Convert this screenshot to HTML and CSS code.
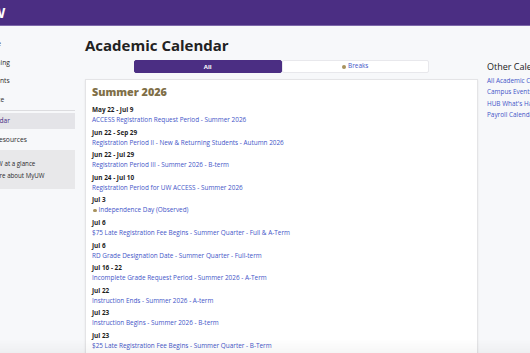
FILE: index.html
```html
<!DOCTYPE html>
<html lang="en">
<head>
<meta charset="utf-8">
<title>Academic Calendar - MyUW</title>
<link rel="stylesheet" href="styles.css">
</head>
<body>
<header class="topbar">
  <span class="brand">MyUW</span>
</header>
<div class="layout">
  <aside class="sidebar">
    <nav class="nav">
      <a class="nav-item">Home</a>
      <a class="nav-item">Teaching</a>
      <a class="nav-item">Students</a>
      <a class="nav-item">Service</a>
    </nav>
    <div class="nav-divider"></div>
    <a class="nav-item nav-item--active">Calendar</a>
    <a class="nav-item">UW Resources</a>
    <div class="info-box">
      <a class="info-link">See MyUW at a glance</a>
      <a class="info-link">Learn more about MyUW</a>
    </div>
  </aside>

  <main class="content">
    <h1 class="page-title">Academic Calendar</h1>
    <div class="tabs">
      <button class="tab tab--active">All</button>
      <button class="tab"><span class="dot"></span>Breaks</button>
    </div>
    <section class="card">
      <h2 class="term">Summer 2026</h2>
      <div class="event"><div class="event-date">May 22 - Jul 9</div><a class="event-link">ACCESS Registration Request Period - Summer 2026</a></div>
      <div class="event"><div class="event-date">Jun 22 - Sep 29</div><a class="event-link">Registration Period II - New &amp; Returning Students - Autumn 2026</a></div>
      <div class="event"><div class="event-date">Jun 22 - Jul 29</div><a class="event-link">Registration Period III - Summer 2026 - B-term</a></div>
      <div class="event"><div class="event-date">Jun 24 - Jul 10</div><a class="event-link">Registration Period for UW ACCESS - Summer 2026</a></div>
      <div class="event"><div class="event-date">Jul 3</div><a class="event-link"><span class="dot"></span>Independence Day (Observed)</a></div>
      <div class="event"><div class="event-date">Jul 6</div><a class="event-link">$75 Late Registration Fee Begins - Summer Quarter - Full &amp; A-Term</a></div>
      <div class="event"><div class="event-date">Jul 6</div><a class="event-link">RD Grade Designation Date - Summer Quarter - Full-term</a></div>
      <div class="event"><div class="event-date">Jul 16 - 22</div><a class="event-link">Incomplete Grade Request Period - Summer 2026 - A-Term</a></div>
      <div class="event"><div class="event-date">Jul 22</div><a class="event-link">Instruction Ends - Summer 2026 - A-term</a></div>
      <div class="event"><div class="event-date">Jul 23</div><a class="event-link">Instruction Begins - Summer 2026 - B-term</a></div>
      <div class="event"><div class="event-date">Jul 23</div><a class="event-link">$25 Late Registration Fee Begins - Summer Quarter - B-Term</a></div>
    </section>
  </main>

  <aside class="others">
    <h3 class="others-title">Other Calendars</h3>
    <a class="others-link">All Academic Calendars</a>
    <a class="others-link">Campus Events</a>
    <a class="others-link">HUB What's Happening</a>
    <a class="others-link">Payroll Calendar</a>
  </aside>
</div>
<div class="bottom-fade"></div>
</body>
</html>
```

FILE: styles.css
```css
* { box-sizing: border-box; }

html, body {
  margin: 0;
  padding: 0;
}

body {
  background: #f7f8fa;
  font-family: "Open Sans", "Noto Sans", sans-serif;
  color: #222;
  overflow: hidden;
  width: 530px;
  height: 353px;
}

a { text-decoration: none; cursor: pointer; }

.topbar {
  height: 26px;
  background: #4b2e83;
  border-bottom: 1px solid #7d68a9;
  display: flex;
  align-items: center;
}

.brand {
  margin-left: -40px;
  color: #fff;
  font-weight: 700;
  font-size: 14px;
  line-height: 1;
}

.layout {
  display: flex;
  align-items: flex-start;
  width: 800px;
}

/* Sidebar */
.sidebar {
  flex: none;
  width: 135px;
  margin-left: -60px;
  padding-top: 8px;
  display: flex;
  flex-direction: column;
}

.nav { display: flex; flex-direction: column; }

.nav-item {
  display: flex;
  align-items: center;
  height: 18.7px;
  padding-left: 42px;
  font-size: 6.7px;
  color: #2a2a2a;
}

.nav-divider {
  margin: 1px 0 2px 0;
  border-top: 1px solid #dcdcdf;
}

.nav-item--active {
  height: 16px;
  background: #e4e4e8;
  color: #4b2e83;
  margin-bottom: 1px;
}

.info-box {
  margin-top: 2px;
  background: #e8e8ea;
  padding: 8px 0 8px 32px;
  display: flex;
  flex-direction: column;
}

.info-link {
  font-size: 6.2px;
  line-height: 11.5px;
  color: #2a2a2a;
}

/* Main content */
.content {
  flex: none;
  width: 393px;
  margin-left: 10px;
  padding-top: 10px;
}

.page-title {
  margin: 0;
  font-size: 15px;
  line-height: 18px;
  font-weight: 700;
  color: #222;
}

.tabs {
  margin: 6px auto 0;
  width: 295px;
  height: 13px;
  display: flex;
}

.tab {
  flex: 1;
  margin: 0;
  padding: 0;
  border: 1px solid #e8e8ec;
  background: #fff;
  border-radius: 2px;
  font-family: inherit;
  font-size: 6.4px;
  color: #4355c8;
  display: flex;
  align-items: center;
  justify-content: center;
  line-height: 1;
}

.tab--active {
  background: #4b2e83;
  border-color: #4b2e83;
  color: #fff;
  font-weight: 700;
  font-size: 6px;
}

.dot {
  display: inline-block;
  width: 4px;
  height: 4px;
  border-radius: 50%;
  background: #a8925d;
  margin-right: 2px;
  vertical-align: middle;
}

.card {
  margin-top: 6px;
  background: #fff;
  border: 1px solid #e4e4e6;
  box-shadow: 0 1px 2px rgba(0, 0, 0, 0.08);
  padding: 5px 6px 20px;
}

.term {
  margin: 0 0 6px;
  font-size: 10.8px;
  line-height: 14px;
  font-weight: 800;
  color: #7f6f48;
}

.event {
  margin-bottom: 2.6px;
}

.event-date {
  font-size: 6.4px;
  line-height: 10px;
  font-weight: 700;
  color: #1e1e1e;
}

.event-link {
  display: flex;
  align-items: center;
  font-size: 6.4px;
  line-height: 10px;
  color: #4355c8;
}

.event-link .dot {
  width: 3.5px;
  height: 3.5px;
  margin: 0 2px 0 1px;
}

/* Right column */
.others {
  flex: none;
  width: 200px;
  margin-left: 9px;
  padding-top: 35px;
  display: flex;
  flex-direction: column;
}

.others-title {
  margin: 0 0 2px;
  font-size: 9px;
  line-height: 12px;
  font-weight: 400;
  color: #222;
  white-space: nowrap;
}

.others-link {
  font-size: 6.4px;
  line-height: 11.3px;
  color: #4355c8;
  white-space: nowrap;
}

.bottom-fade {
  position: fixed;
  left: 0;
  right: 0;
  bottom: 0;
  height: 14px;
  background: linear-gradient(to bottom, rgba(0, 0, 0, 0), rgba(0, 0, 0, 0.035));
  pointer-events: none;
}
```
